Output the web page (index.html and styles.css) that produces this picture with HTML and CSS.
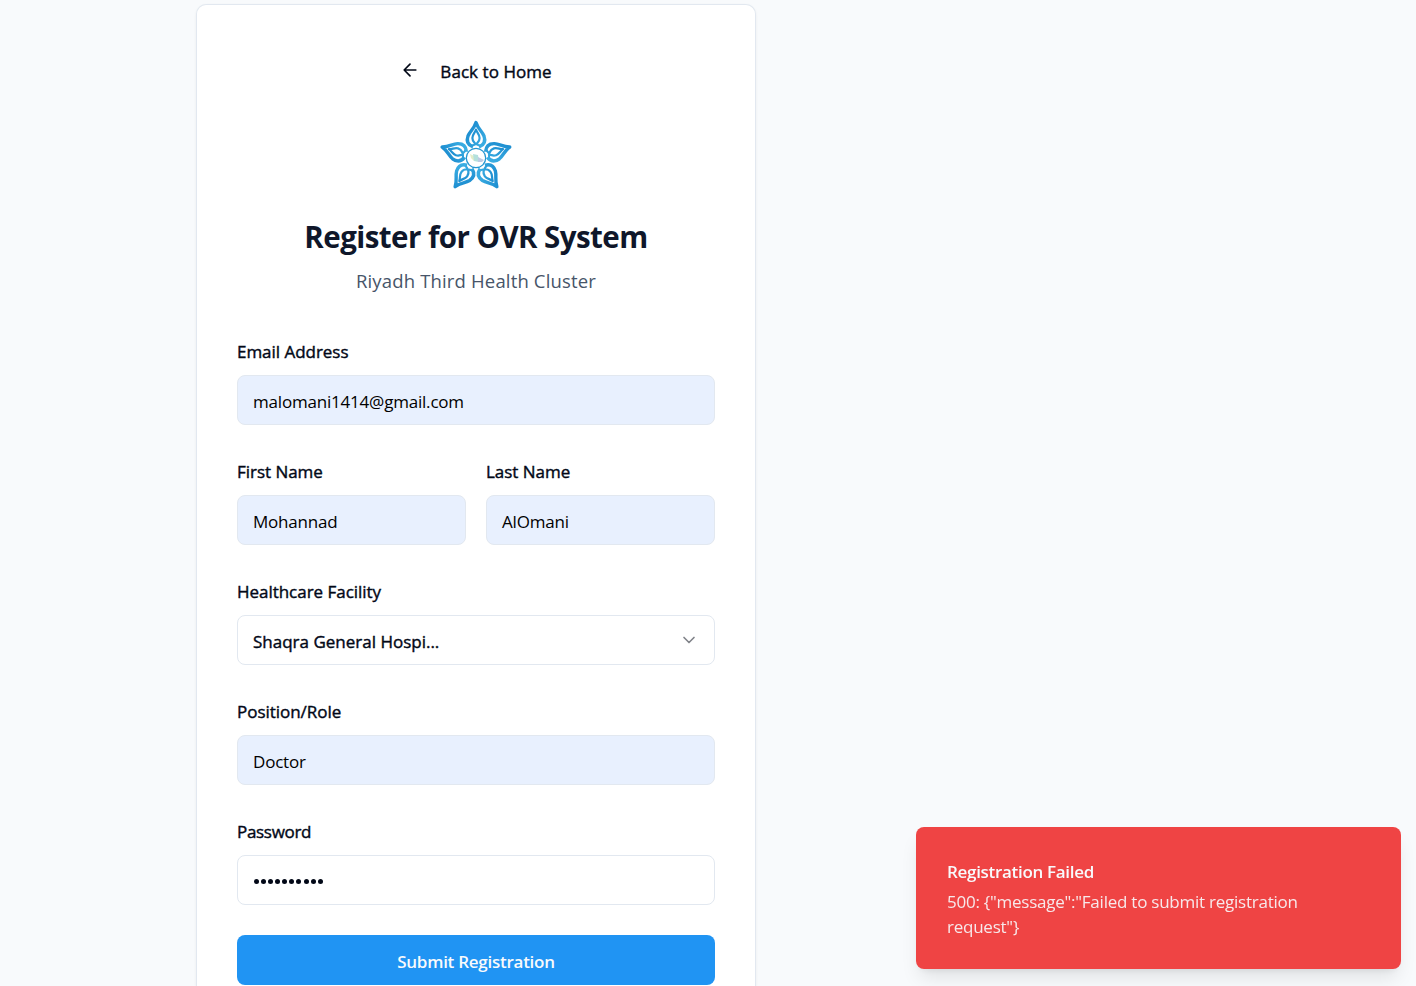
FILE: index.html
```html
<!DOCTYPE html>
<html lang="en">
<head>
<meta charset="utf-8">
<title>Register for OVR System</title>
<link rel="stylesheet" href="styles.css">
</head>
<body>
<main class="card">
  <a class="back"><svg class="back-icon" viewBox="0 0 24 24"><path d="m12 19-7-7 7-7M19 12H5"/></svg><span>Back to Home</span></a>
  <svg class="logo" viewBox="-36 -38 72 72">
    <defs>
      <linearGradient id="blue" x1="0" y1="0" x2="1" y2="1"><stop offset="0" stop-color="#1686cc"/><stop offset="1" stop-color="#3db0e4"/></linearGradient>
      <g id="petal">
        <path class="leaf" d="M-3 -11C-8 -13 -9.800 -17 -8 -22C-6 -27 -2 -29 0 -35.500C2 -29 6 -27 8 -22C9.800 -17 8 -13 3 -11"/>
        <path class="loop" d="M-6 -12C0 -13 3.600 -16 3.600 -20C3.600 -23.500 1 -25 0 -28.500C-1 -25 -3.600 -23.500 -3.600 -20C-3.600 -16 0 -13 6 -12"/>
      </g>
    </defs>
    <g class="petals">
      <use href="#petal"/><use href="#petal" transform="rotate(72)"/><use href="#petal" transform="rotate(144)"/><use href="#petal" transform="rotate(216)"/><use href="#petal" transform="rotate(288)"/>
    </g>
    <circle class="hub" r="9.700"/>
    <path d="M-6 -4L-2 -2L-2 3L-5 0Z" fill="#e3edc8"/><path d="M-3 -4L2 -3L3 4L-2 3Z" fill="#b4e0dc"/><path d="M2 -1L8 2L6 4L2 4Z" fill="#bdcbe4"/>
  </svg>
  <h1 class="title">Register for OVR System</h1>
  <p class="subtitle">Riyadh Third Health Cluster</p>
  <form class="form">
    <div class="field"><label class="label">Email Address</label><div class="input filled">malomani1414@gmail.com</div></div>
    <div class="row">
      <div class="field"><label class="label">First Name</label><div class="input filled">Mohannad</div></div>
      <div class="field"><label class="label">Last Name</label><div class="input filled">AlOmani</div></div>
    </div>
    <div class="field"><label class="label">Healthcare Facility</label><div class="input select"><span>Shaqra General Hospi...</span><svg class="chevron" viewBox="0 0 24 24"><path d="m6 9 6 6 6-6"/></svg></div></div>
    <div class="field"><label class="label">Position/Role</label><div class="input filled">Doctor</div></div>
    <div class="field"><label class="label label-password">Password</label><div class="input"><span class="dots"><i></i><i></i><i></i><i></i><i></i><i></i><i></i><i></i><i></i><i></i></span></div></div>
    <div class="submit">Submit Registration</div>
  </form>
</main>
<aside class="toast">
  <div class="toast-title">Registration Failed</div>
  <div class="toast-text">500: {"message":"Failed to submit registration<br>request"}</div>
</aside>
</body>
</html>
```
FILE: styles.css
```css
* { box-sizing: border-box; }
body { margin: 0; padding: 4px 0 0 196px; height: 986px; overflow: hidden; background: #f8fafc; color: #020817; font: 400 17px/25px "Open Sans", sans-serif; }
.card { width: 560px; height: 982px; padding: 50px 40px 0; background: #fff; border: 1px solid #e2e8f0; border-bottom: 0; border-radius: 10px 10px 0 0; box-shadow: 0 1px 3px rgba(0,0,0,.06); display: flex; flex-direction: column; }
.back { display: flex; align-items: center; align-self: center; gap: 20px; height: 32px; letter-spacing: .05px; -webkit-text-stroke: .4px; }
.back-icon { width: 20px; height: 20px; margin-top: -2px; fill: none; stroke: #020817; stroke-width: 2; stroke-linecap: round; stroke-linejoin: round; }
.logo { width: 72px; height: 72px; margin-top: 33px; align-self: center; }
.petals { fill: none; stroke: url(#blue); stroke-linejoin: round; }
.leaf { stroke-width: 3.400; }
.loop { stroke-width: 2.200; }
.hub { fill: #fff; stroke: #2596d1; stroke-width: 1.300; }
.title { margin: 24px 0 0; text-align: center; font-size: 29.500px; line-height: 41px; font-weight: 700; letter-spacing: -.55px; color: #0f172a; }
.subtitle { margin: 10px 0 0; text-align: center; font-size: 18.500px; line-height: 28px; letter-spacing: .16px; color: #475569; }
.form { margin-top: 43px; display: flex; flex-direction: column; gap: 33px; }
.row { display: grid; grid-template-columns: 1fr 1fr; gap: 20px; }
.field { display: flex; flex-direction: column; gap: 9px; }
.label { line-height: 28px; letter-spacing: -.03px; -webkit-text-stroke: .4px; }
.label-password { letter-spacing: -.3px; }
.input { height: 50px; padding: 2px 15px 0; border: 1px solid #e2e8f0; border-radius: 8px; display: flex; align-items: center; background: #fff; }
.filled { background: #e8f0fe; color: #000; letter-spacing: -.2px; }
.select { justify-content: space-between; }
.select span { -webkit-text-stroke: .4px; }
.chevron { width: 20px; height: 20px; margin-top: -2px; fill: none; stroke: #808389; stroke-width: 2; stroke-linecap: round; stroke-linejoin: round; }
.dots { display: flex; gap: 2.150px; padding-left: .6px; }
.dots i { width: 5px; height: 5px; border-radius: 50%; background: #020817; }
.submit { height: 50px; margin-top: -3px; padding-top: 2px; border-radius: 8px; background: #2094f3; color: #f8fafc; display: flex; align-items: center; justify-content: center; font-weight: 600; letter-spacing: -.26px; }
.toast { position: fixed; left: 916px; top: 827px; width: 485px; height: 142px; padding: 32px 31px; border-radius: 8px; background: #ef4444; color: #f8fafc; box-shadow: 0 12px 19px -4px rgba(0,0,0,.1), 0 5px 8px -5px rgba(0,0,0,.1); white-space: nowrap; }
.toast-title { font-weight: 600; letter-spacing: -.31px; }
.toast-text { margin-top: 5px; opacity: .9; letter-spacing: -.24px; }
```
